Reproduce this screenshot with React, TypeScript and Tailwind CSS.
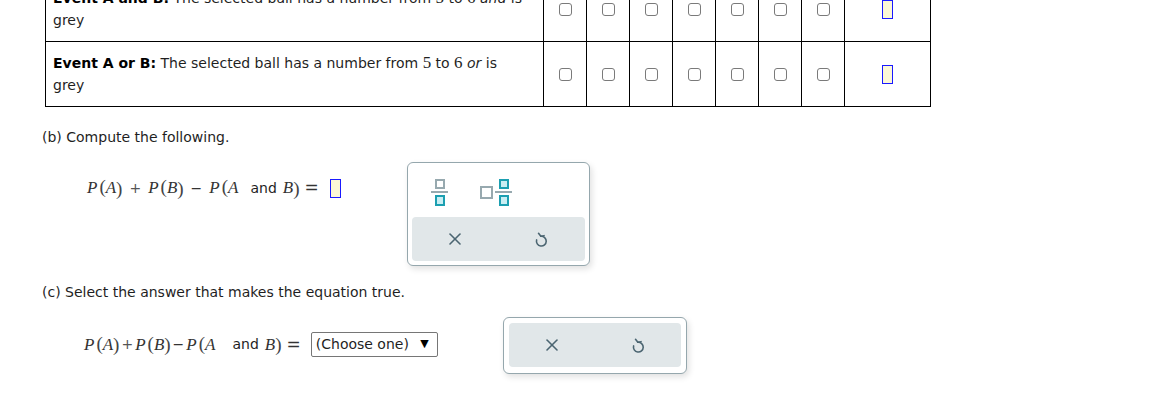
import React from 'react';

const sans = "font-['DejaVu_Sans','Verdana',sans-serif]";
const serif = "font-['Liberation_Serif','Times_New_Roman',serif]";

// little grey checkbox used in the table
const Check = () => (
  <span className="inline-block w-[13px] h-[13px] rounded-[3px] border-[1.5px] border-[#7a7a7a] bg-white align-middle" />
);

// yellow answer slot with blue border
const Slot = () => (
  <span className="inline-block w-[11px] h-[19px] border border-[#1a1aff] bg-[#fcf8d6] align-middle" />
);

const Num = ({ children }: { children: React.ReactNode }) => (
  <span className={`${serif} text-[17px]`}>{children}</span>
);

const V = ({ children }: { children: React.ReactNode }) => (
  <span className={`${serif} italic text-[17px] text-[#333]`}>{children}</span>
);

const Paren = ({ children }: { children: React.ReactNode }) => (
  <span className={`${serif} text-[19px] text-[#444] leading-none`}>{children}</span>
);

// P(x) in the math formulas
const Pr = ({ v, close = true }: { v: string; close?: boolean }) => (
  <span className="inline-flex items-center">
    <V>P</V>
    <span className="ml-[2px]"><Paren>(</Paren></span>
    <V>{v}</V>
    {close && <Paren>)</Paren>}
  </span>
);

const XIcon = () => (
  <svg width="14" height="14" viewBox="0 0 14 14" fill="none" stroke="#4b6571" strokeWidth="1.6" strokeLinecap="round">
    <line x1="2" y1="2" x2="12" y2="12" />
    <line x1="12" y1="2" x2="2" y2="12" />
  </svg>
);

const UndoIcon = () => (
  <svg width="15" height="17" viewBox="0 0 14 16" fill="none" stroke="#4b6571" strokeWidth="1.5" strokeLinecap="round" strokeLinejoin="round">
    <path d="M6.4 5 A4.6 4.6 0 1 1 2.4 8.4" />
    <path d="M4.2 2.2 L6.4 5 L9.4 4.4" />
  </svg>
);

const Fraction = ({ topTeal }: { topTeal?: boolean }) => (
  <span className="flex flex-col items-center">
    <span className={`w-[10px] h-[10px] border-2 ${topTeal ? 'border-[#1c9fb1] bg-[#c9eef3]' : 'border-[#97a9af] bg-white'}`} />
    <span className="w-[17px] h-[2px] bg-[#97a9af] my-[2px]" />
    <span className="w-[10px] h-[11px] border-2 border-[#1c9fb1] bg-[#c9eef3]" />
  </span>
);

const ClearUndo = () => (
  <div className="grid grid-cols-2 h-[44px] rounded-[4px] bg-[#e1e7e9]">
    <div className="flex items-center justify-center"><XIcon /></div>
    <div className="flex items-center justify-center"><UndoIcon /></div>
  </div>
);

const rows = [
  { label: 'Event A and B:', conj: 'and' },
  { label: 'Event A or B:', conj: 'or' },
];

export default function App() {
  return (
    <div className={`${sans} text-[14px] text-[#1f1f1f] bg-white w-[1155px] h-[405px] overflow-hidden`}>
      <div className="-mt-[24px]">
        {/* event table */}
        <table className="ml-[45px] border-collapse w-[885px] table-fixed">
          <colgroup>
            <col className="w-[498px]" />
            {Array.from({ length: 7 }).map((_, i) => (
              <col key={i} className="w-[43px]" />
            ))}
            <col className="w-[86px]" />
          </colgroup>
          <tbody>
            {rows.map((r) => (
              <tr key={r.label}>
                <td className="border border-black pl-[7px] py-[10px] leading-[22px] align-middle">
                  <div className="w-[476px]">
                    <b className="text-black">{r.label}</b> The selected ball has a number from <Num>5</Num> to <Num>6</Num>{' '}
                    <i>{r.conj}</i> is grey
                  </div>
                </td>
                {Array.from({ length: 7 }).map((_, i) => (
                  <td key={i} className="border border-black text-center align-middle">
                    <Check />
                  </td>
                ))}
                <td className="border border-black text-center align-middle">
                  <Slot />
                </td>
              </tr>
            ))}
          </tbody>
        </table>

        {/* part b */}
        <div className="ml-[42px] mt-[19px] leading-[22px]">(b) Compute the following.</div>
        <div className="flex items-start">
          <div className="ml-[87px] w-[320px] mt-[29px] flex items-center h-[22px] whitespace-nowrap">
            <Pr v="A" />
            <span className="mx-[7px] text-[#555]">+</span>
            <Pr v="B" />
            <span className="mx-[7px] text-[#333]">−</span>
            <Pr v="A" close={false} />
            <span className="ml-[12px] mr-[6px]">and</span>
            <V>B</V><Paren>)</Paren>
            <span className="ml-[5px] mr-[11px] text-[17px] text-[#333]">=</span>
            <Slot />
          </div>
          <div className="mt-[14px] w-[183px] h-[104px] rounded-[6px] border border-[#95a7ad] bg-white p-[4px] shadow-[2px_3px_6px_rgba(0,0,0,0.12)] flex flex-col">
            <div className="flex flex-1 items-center">
              <div className="w-[55px] flex justify-center"><Fraction /></div>
              <div className="w-[58px] flex justify-center items-center gap-[2px]">
                <span className="w-[13px] h-[13px] border-2 border-[#97a9af] bg-white" />
                <Fraction topTeal />
              </div>
            </div>
            <ClearUndo />
          </div>
        </div>

        {/* part c */}
        <div className="ml-[42px] mt-[15px] leading-[22px]">(c) Select the answer that makes the equation true.</div>
        <div className="flex items-start">
          <div className="ml-[84px] w-[419px] mt-[29px] flex items-center h-[25px] whitespace-nowrap">
            <Pr v="A" />
            <span className="mx-[2px] text-[#555]">+</span>
            <Pr v="B" />
            <span className="mx-[2px] text-[#333]">−</span>
            <Pr v="A" close={false} />
            <span className="ml-[17px] mr-[6px]">and</span>
            <V>B</V><Paren>)</Paren>
            <span className="ml-[5px] mr-[10px] text-[17px] text-[#333]">=</span>
            <span className="h-[25px] w-[127px] border border-[#767676] rounded-[2px] flex items-center pl-[4px] pr-[8px] justify-between">
              <span>(Choose one)</span>
              <span className="text-[11px] text-black">▼</span>
            </span>
          </div>
          <div className="mt-[14px] w-[184px] h-[57px] rounded-[6px] border border-[#95a7ad] bg-white p-[5px] shadow-[2px_3px_6px_rgba(0,0,0,0.12)]">
            <ClearUndo />
          </div>
        </div>
      </div>
    </div>
  );
}
